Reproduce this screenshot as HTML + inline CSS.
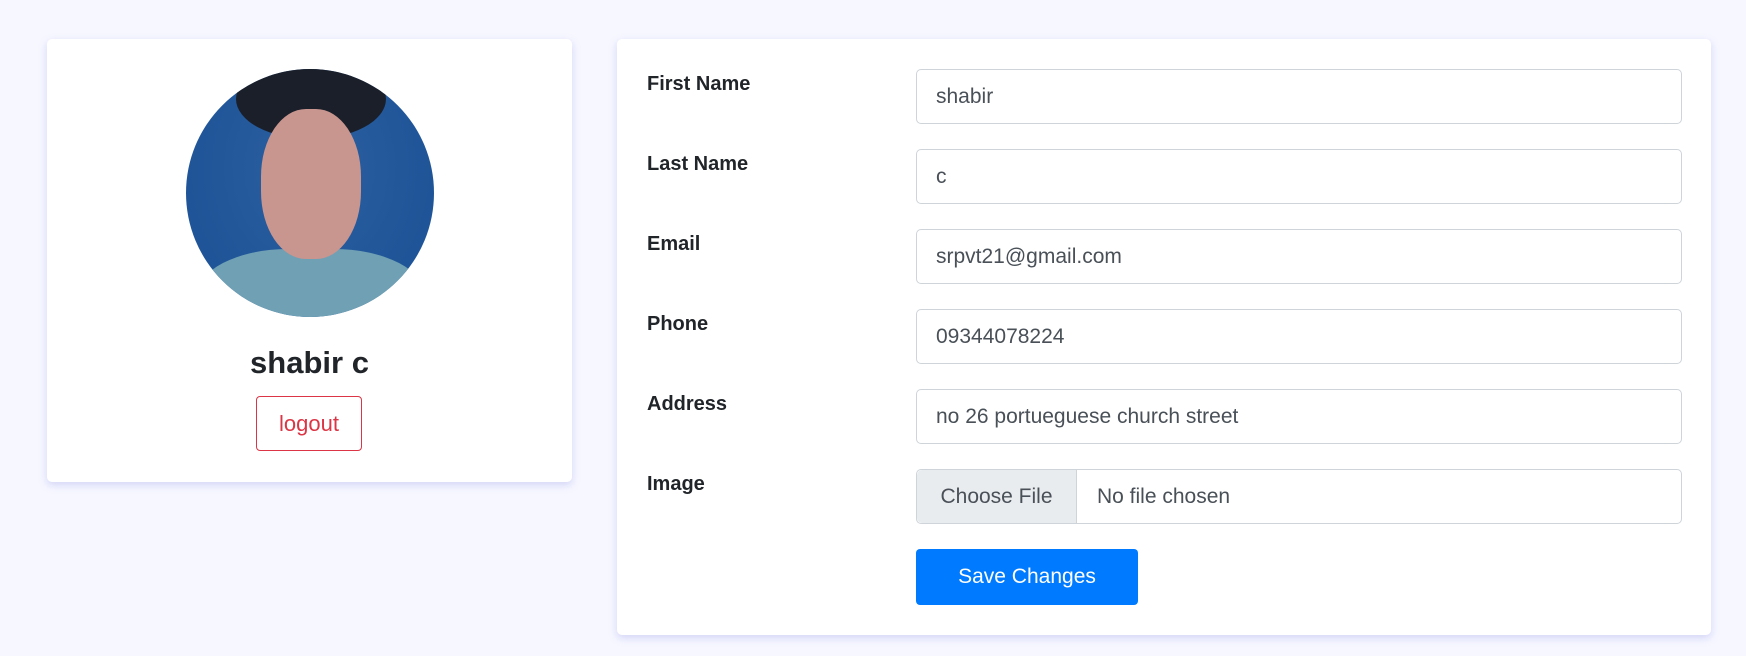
<!DOCTYPE html>
<html><head><style>
body{margin:0;width:1746px;height:656px;background:#f6f7ff;font-family:"Liberation Sans",sans-serif;position:relative;overflow:hidden}
.card{position:absolute;background:#fff;border-radius:5px;box-shadow:0 3px 8px rgba(150,150,230,.35)}
.av{position:absolute;left:186px;top:69px;width:248px;height:248px;border-radius:50%;overflow:hidden;background:radial-gradient(ellipse at 50% 40%,#2b5fa0,#1f5598 70%)}
.lbl{position:absolute;left:647px;font-weight:bold;font-size:20px;color:#212529}
.inp{position:absolute;left:916px;width:745px;height:53px;border:1px solid #ced4da;border-radius:5px;background:#fff;font-size:21px;color:#495057;line-height:53px;padding-left:19px;box-sizing:content-box}
</style></head><body>
<div class="card" style="left:47px;top:39px;width:525px;height:443px"></div>
<div class="card" style="left:617px;top:39px;width:1094px;height:596px"></div>
<div class="av">
<div style="position:absolute;left:50px;top:-10px;width:150px;height:80px;background:#1a1f2a;border-radius:50%"></div>
<div style="position:absolute;left:10px;top:180px;width:230px;height:120px;background:#6fa0b4;border-radius:40% 40% 0 0"></div>
<div style="position:absolute;left:75px;top:40px;width:100px;height:150px;background:#c8958f;border-radius:45%"></div>
</div>
<div style="position:absolute;left:47px;width:525px;top:345px;text-align:center;font-size:31px;font-weight:bold;color:#212529">shabir c</div>
<div style="position:absolute;left:256px;top:396px;width:104px;height:53px;border:1px solid #dc3545;border-radius:4px;color:#dc3545;font-size:22px;text-align:center;line-height:53px">logout</div>
<div class="lbl" style="top:73px">First Name</div>
<div class="lbl" style="top:153px">Last Name</div>
<div class="lbl" style="top:233px">Email</div>
<div class="lbl" style="top:313px">Phone</div>
<div class="lbl" style="top:393px">Address</div>
<div class="lbl" style="top:473px">Image</div>
<div class="inp" style="top:69px">shabir</div>
<div class="inp" style="top:149px">c</div>
<div class="inp" style="top:229px">srpvt21@gmail.com</div>
<div class="inp" style="top:309px">09344078224</div>
<div class="inp" style="top:389px">no 26 portueguese church street</div>
<div class="inp" style="top:469px;padding-left:0;width:764px"><span style="display:inline-block;width:159px;background:#e9ecef;border-right:1px solid #ced4da;color:#495057;text-align:center;border-radius:5px 0 0 5px">Choose File</span><span style="padding-left:20px">No file chosen</span></div>
<div style="position:absolute;left:916px;top:549px;width:222px;height:56px;background:#007bff;border-radius:4px;color:#fff;font-size:21px;text-align:center;line-height:56px">Save Changes</div>
</body></html>
